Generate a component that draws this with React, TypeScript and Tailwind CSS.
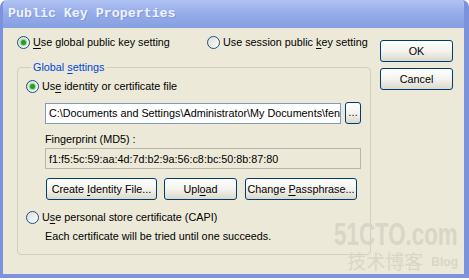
import type { ReactNode } from "react";

const FONT = "font-['Liberation_Sans','Arial',sans-serif]";

function Radio({ checked }: { checked?: boolean }) {
    return (
        <span className="flex h-[13px] w-[13px] shrink-0 items-center justify-center rounded-full border border-[#1c5180] bg-linear-to-br from-[#dcdcd7] to-white">
            {checked && <span className="h-[5px] w-[5px] rounded-full bg-[#21a121] shadow-[0_0_1px_1px_#8fd48f]" />}
        </span>
    );
}

function XpButton({ children, className = "" }: { children: ReactNode; className?: string }) {
    return (
        <div className={`flex h-[22px] shrink-0 items-center justify-center rounded-[3px] border border-[#003c74] bg-linear-to-b from-white via-[#f4f3ee] to-[#dcd9cb] text-black ${className}`}>
            <span>{children}</span>
        </div>
    );
}

const U = ({ children }: { children: ReactNode }) => <span className="underline underline-offset-2">{children}</span>;

export default function App() {
    return (
        <div className={`h-[280px] w-[469px] overflow-hidden bg-white text-[10.8px] leading-[14px] text-black ${FONT}`}>
            <div className="flex h-[278px] flex-col overflow-hidden rounded-t-[7px] border-b-[4px] border-l-[3px] border-r-[5px] border-[#7c92dc]">
                {/* title bar */}
                <div className="flex h-[28px] shrink-0 items-center bg-linear-to-b from-[#b0c2f2] via-[#95ace9] to-[#869fe2] pl-[5px]">
                    <span className="font-['Liberation_Mono','Courier_New',monospace] text-[13.3px] font-bold text-[#eef2fc] [text-shadow:1px_1px_0_#8299dc]">Public Key Properties</span>
                </div>

                {/* body */}
                <div className="relative flex flex-1 bg-[#ece9d8] pl-[14px]">
                    <div className="flex w-[354px] flex-col pt-[6px]">
                        <div className="flex h-[16px] items-center">
                            <div className="flex w-[190px] items-center gap-[3px]">
                                <Radio checked />
                                <span><U>U</U>se global public key setting</span>
                            </div>
                            <div className="flex items-center gap-[3px]">
                                <Radio />
                                <span>Use session public <U>k</U>ey setting</span>
                            </div>
                        </div>

                        <fieldset className="mt-[10px] rounded-[4px] border border-[#d0d0bf] pb-[11px] pl-[8px]">
                            <legend className="ml-[5px] px-[2px] leading-[15px] text-[#0046d5]">Global <U>s</U>ettings</legend>

                            <div className="mt-[3px] flex h-[16px] items-center gap-[3px]">
                                <Radio checked />
                                <span>Us<U>e</U> identity or certificate file</span>
                            </div>

                            <div className="flex flex-col pl-[19px]">
                                <div className="mt-[8px] flex items-center gap-[4px]">
                                    <div className="flex h-[21px] w-[296px] items-center overflow-hidden whitespace-nowrap border border-[#7f9db9] bg-white pl-[3px]">
                                        <span>C:\Documents and Settings\Administrator\My Documents\fen</span>
                                    </div>
                                    <XpButton className="h-[20px] w-[16px] text-[10px] leading-[10px]">…</XpButton>
                                </div>

                                <div className="mt-[8px]">Fingerprint (MD5) :</div>

                                <div className="mt-[2px] flex h-[21px] w-[316px] items-center border border-[#b8b6a8] pl-[3px]">
                                    <span>f1:f5:5c:59:aa:4d:7d:b2:9a:56:c8:bc:50:8b:87:80</span>
                                </div>

                                <div className="mt-[9px] flex gap-[7px] pl-[1px]">
                                    <XpButton className="w-[111px]">Create <U>I</U>dentity File...</XpButton>
                                    <XpButton className="w-[73px]">Upl<U>o</U>ad</XpButton>
                                    <XpButton className="ml-[1px] w-[112px]">Change <U>P</U>assphrase...</XpButton>
                                </div>
                            </div>

                            <div className="mt-[9px] flex h-[16px] items-center gap-[3px]">
                                <Radio />
                                <span>U<U>s</U>e personal store certificate (CAPI)</span>
                            </div>

                            <div className="mt-[4px] pl-[19px]">Each certificate will be tried until one succeeds.</div>
                        </fieldset>
                    </div>

                    <div className="ml-[9px] flex flex-col gap-[6px] pt-[12px]">
                        <XpButton className="w-[73px]">OK</XpButton>
                        <XpButton className="w-[73px]">Cancel</XpButton>
                    </div>

                    {/* watermark */}
                    <div className="pointer-events-none absolute bottom-[2px] right-[6px] flex flex-col items-end">
                        <span className="origin-right scale-x-[0.72] text-[31px] font-bold leading-[30px] text-[#d9d6c7]">51CTO.com</span>
                        <div className="flex items-end gap-[8px]">
                            <span className="font-['Noto_Sans_CJK_SC',sans-serif] text-[19px] leading-[22px] text-[#d9d6c7]">技术博客</span>
                            <span className="pb-[3px] text-[12px] font-bold leading-[14px] text-[#d9d6c7]">Blog</span>
                        </div>
                    </div>
                </div>
            </div>
        </div>
    );
}
